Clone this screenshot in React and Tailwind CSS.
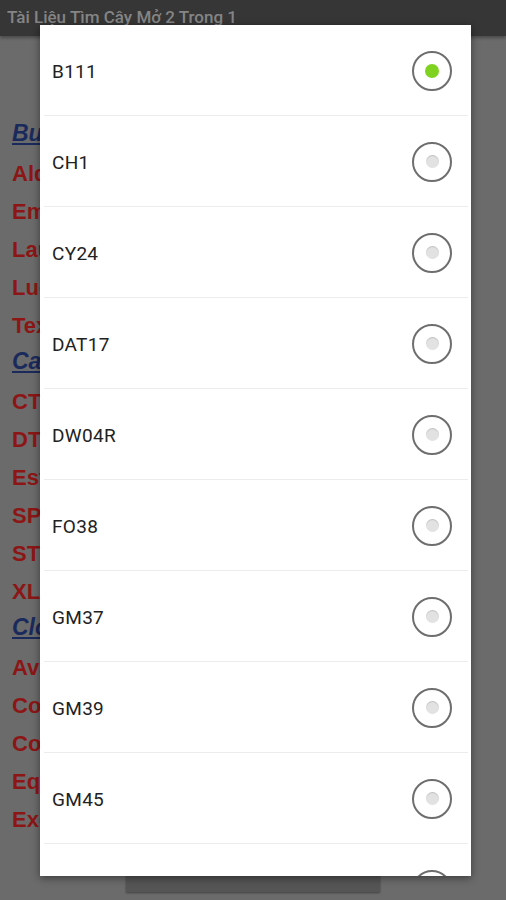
import { useState } from "react";

const bgRows = [
  { t: "Bulk", head: true },
  { t: "Alder" },
  { t: "Emerald" },
  { t: "Laurel" },
  { t: "Lucas" },
  { t: "Texas" },
  { t: "Catalog", head: true },
  { t: "CT100" },
  { t: "DT200" },
  { t: "Estate" },
  { t: "SP300" },
  { t: "ST400" },
  { t: "XL500" },
  { t: "Clone", head: true },
  { t: "Avalon" },
  { t: "Cobalt" },
  { t: "Cortez" },
  { t: "Equinox" },
  { t: "Excel" },
];

const options = ["B111", "CH1", "CY24", "DAT17", "DW04R", "FO38", "GM37", "GM39", "GM45", "GM47"];

function Radio({ on }) {
  return (
    <div className="w-[40px] h-[40px] rounded-full border-2 border-[#6e6e6e] flex items-center justify-center bg-white">
      {on ? (
        <div className="w-[14px] h-[14px] rounded-full bg-[#7fd320]" />
      ) : (
        <div className="w-[13px] h-[13px] rounded-full bg-[#e2e2e2] shadow-[inset_0_1px_1px_rgba(0,0,0,0.15)]" />
      )}
    </div>
  );
}

export default function App() {
  const [selected, setSelected] = useState("B111");

  return (
    <div className="relative w-[506px] h-[900px] bg-[#6b6b6b] overflow-hidden font-['Roboto',sans-serif]">
      <div className="h-[36px] bg-[#363636] flex items-center px-[7px] shadow-[0_2px_3px_rgba(0,0,0,0.3)]">
        <span className="text-[17px] text-[#858585] font-medium">Tài Liệu Tìm Cây Mở 2 Trong 1</span>
      </div>

      <div className="pt-[81px] pl-[12px] flex flex-col">
        {bgRows.map((r, i) =>
          r.head ? (
            <div key={i} className="h-[38px] flex items-center pb-[6px]">
              <span className="text-[23px] font-bold italic underline text-[#1a2a5c] leading-none font-['Liberation_Sans',sans-serif]">{r.t}</span>
            </div>
          ) : (
            <div key={i} className="h-[38px] flex items-center">
              <span className="text-[22px] font-bold text-[#8c1616] leading-none font-['Liberation_Sans',sans-serif]">{r.t}</span>
            </div>
          )
        )}
      </div>

      <div className="absolute left-[126px] top-[868px] w-[254px] h-[24px] bg-[#555] shadow-[0_1px_2px_rgba(0,0,0,0.4)]" />

      <div className="absolute left-[40px] top-[25px] w-[431px] h-[851px] bg-white shadow-[0_2px_8px_rgba(0,0,0,0.45)] overflow-hidden">
        {options.map((o) => (
          <div key={o} className="relative h-[91px] flex items-center justify-between pl-[12px] pr-[19px] cursor-pointer" onClick={() => setSelected(o)}>
            <span className="pt-[3px] text-[19px] text-[#222] tracking-[0.3px]">{o}</span>
            <Radio on={selected === o} />
            <div className="absolute bottom-0 left-[4px] right-[3px] h-[1px] bg-[#ececec]" />
          </div>
        ))}
      </div>
    </div>
  );
}
